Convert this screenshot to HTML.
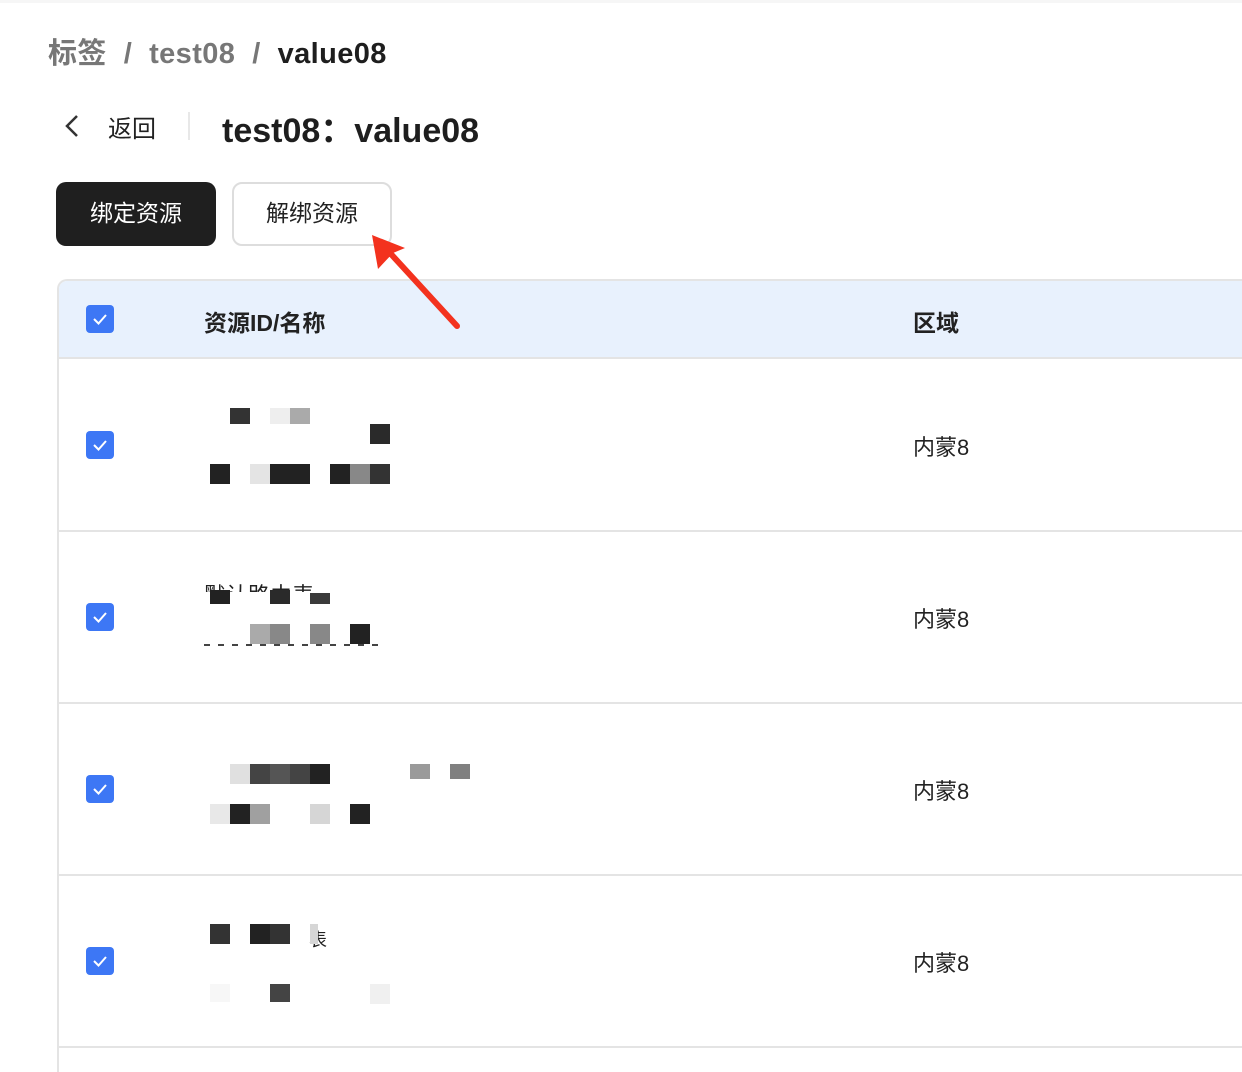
<!DOCTYPE html>
<html style="width:1242px;height:1072px;overflow:hidden"><head><meta charset="utf-8"><style>
*{margin:0;padding:0;box-sizing:border-box}
body{width:1242px;height:1072px;background:#fff;position:relative;overflow:hidden;font-family:"Liberation Sans","Noto Sans CJK SC",sans-serif}
.a{position:absolute;white-space:nowrap}
.b{position:absolute;width:20px;height:20px}
.cb{position:absolute;left:86px;width:28px;height:28px;background:#3d77f5;border-radius:4px}
.cb svg{position:absolute;left:5px;top:5px}
.hl{position:absolute;left:57px;right:0;height:2px;background:#e4e4e4}
.reg{position:absolute;left:913px;font-size:22px;color:#222}
</style></head><body>
<div style="position:absolute;left:0;top:0;width:1242px;height:3px;background:#f6f6f6"></div>
<div class="a" style="left:48px;top:30px;font-size:29px;font-weight:bold;color:#777;letter-spacing:0.4px">标签 &nbsp;/&nbsp; test08 &nbsp;/&nbsp; <span style="color:#1e1e1e">value08</span></div>
<svg class="a" style="left:62px;top:113px" width="20" height="26"><path d="M15 3 L5 13 L15 23" fill="none" stroke="#333" stroke-width="2.5"/></svg>
<div class="a" style="left:108px;top:109px;font-size:24px;color:#222">返回</div>
<div class="a" style="left:188px;top:112px;width:2px;height:28px;background:#e8e8e8"></div>
<div class="a" style="left:222px;top:103px;font-size:34px;font-weight:bold;color:#1e1e1e">test08：value08</div>
<div class="a" style="left:56px;top:182px;width:160px;height:64px;background:#1f1f1f;border-radius:10px;color:#fff;font-size:23px;line-height:62px;text-align:center">绑定资源</div>
<div class="a" style="left:232px;top:182px;width:160px;height:64px;border:2px solid #ddd;border-radius:10px;color:#222;font-size:23px;line-height:58px;text-align:center">解绑资源</div>
<div class="a" style="left:57px;top:279px;width:1185px;height:793px;border:2px solid #e4e4e4;border-right:none;border-bottom:none;border-radius:10px 0 0 0"></div>
<div class="a" style="left:59px;top:281px;width:1183px;height:77px;background:#e8f1fd;border-radius:8px 0 0 0"></div>
<div class="hl" style="top:357px"></div>
<div class="hl" style="top:530px"></div>
<div class="hl" style="top:702px"></div>
<div class="hl" style="top:874px"></div>
<div class="hl" style="top:1046px"></div>
<div class="a" style="left:204px;top:304px;font-size:23px;font-weight:bold;color:#222">资源ID/名称</div>
<div class="a" style="left:913px;top:304px;font-size:23px;font-weight:bold;color:#222">区域</div>
<div class="cb" style="top:305px"><svg width="18" height="18"><path d="M3 9 L7.5 13.5 L15 5" fill="none" stroke="#fff" stroke-width="2"/></svg></div>
<div class="cb" style="top:431px"><svg width="18" height="18"><path d="M3 9 L7.5 13.5 L15 5" fill="none" stroke="#fff" stroke-width="2"/></svg></div>
<div class="cb" style="top:603px"><svg width="18" height="18"><path d="M3 9 L7.5 13.5 L15 5" fill="none" stroke="#fff" stroke-width="2"/></svg></div>
<div class="cb" style="top:775px"><svg width="18" height="18"><path d="M3 9 L7.5 13.5 L15 5" fill="none" stroke="#fff" stroke-width="2"/></svg></div>
<div class="cb" style="top:947px"><svg width="18" height="18"><path d="M3 9 L7.5 13.5 L15 5" fill="none" stroke="#fff" stroke-width="2"/></svg></div>
<div class="reg" style="top:430px">内蒙8</div>
<div class="reg" style="top:602px">内蒙8</div>
<div class="reg" style="top:774px">内蒙8</div>
<div class="reg" style="top:946px">内蒙8</div>
<!-- row1 -->
<div class="b" style="left:230px;top:408px;height:16px;background:#333"></div>
<div class="b" style="left:270px;top:408px;height:16px;background:#eee"></div>
<div class="b" style="left:290px;top:408px;height:16px;background:#aaa"></div>
<div class="b" style="left:370px;top:424px;background:#2a2a2a"></div>
<div class="b" style="left:210px;top:464px;background:#222"></div>
<div class="b" style="left:250px;top:464px;background:#e4e4e4"></div>
<div class="b" style="left:270px;top:464px;width:40px;background:#222"></div>
<div class="b" style="left:330px;top:464px;background:#222"></div>
<div class="b" style="left:350px;top:464px;background:#888"></div>
<div class="b" style="left:370px;top:464px;background:#333"></div>
<!-- row2 -->
<div class="a" style="left:204px;top:578px;font-size:22px;color:#222;height:14px;overflow:hidden">默认路由表</div>
<div class="b" style="left:210px;top:590px;height:14px;background:#222"></div>
<div class="b" style="left:270px;top:590px;height:14px;background:#2a2a2a"></div>
<div class="b" style="left:310px;top:593px;height:11px;background:#3a3a3a"></div>
<div class="b" style="left:250px;top:624px;background:#aaa"></div>
<div class="b" style="left:270px;top:624px;background:#888"></div>
<div class="b" style="left:310px;top:624px;background:#888"></div>
<div class="b" style="left:350px;top:624px;background:#222"></div>
<div class="a" style="left:204px;top:644px;width:182px;height:2px;background:repeating-linear-gradient(90deg,#444 0 6px,transparent 6px 14px)"></div>
<!-- row3 -->
<div class="b" style="left:230px;top:764px;background:#e0e0e0"></div>
<div class="b" style="left:250px;top:764px;background:#444"></div>
<div class="b" style="left:270px;top:764px;background:#555"></div>
<div class="b" style="left:290px;top:764px;background:#444"></div>
<div class="b" style="left:310px;top:764px;background:#222"></div>
<div class="b" style="left:410px;top:764px;height:15px;background:#9a9a9a"></div>
<div class="b" style="left:450px;top:764px;height:15px;background:#808080"></div>
<div class="b" style="left:210px;top:804px;background:#e8e8e8"></div>
<div class="b" style="left:230px;top:804px;background:#222"></div>
<div class="b" style="left:250px;top:804px;background:#a0a0a0"></div>
<div class="b" style="left:310px;top:804px;background:#d6d6d6"></div>
<div class="b" style="left:350px;top:804px;background:#222"></div>
<!-- row4 -->
<div class="b" style="left:210px;top:924px;background:#333"></div>
<div class="b" style="left:250px;top:924px;background:#222"></div>
<div class="b" style="left:270px;top:924px;background:#333"></div>
<div class="a" style="left:309px;top:926px;font-size:18px;color:#222">表</div>
<div class="b" style="left:310px;top:924px;width:8px;background:#d6d6d6"></div>
<div class="b" style="left:210px;top:984px;height:18px;background:#f7f7f7"></div>
<div class="b" style="left:270px;top:984px;height:18px;background:#444"></div>
<div class="b" style="left:370px;top:984px;background:#f0f0f0"></div>
<!-- arrow -->
<svg class="a" style="left:360px;top:225px" width="110" height="115"><path d="M97 101 L30 28" stroke="#f3321e" stroke-width="6" stroke-linecap="round"/><path d="M12 10 L45 23 L33 28 L18 44 Z" fill="#f3321e"/></svg>
</body></html>
